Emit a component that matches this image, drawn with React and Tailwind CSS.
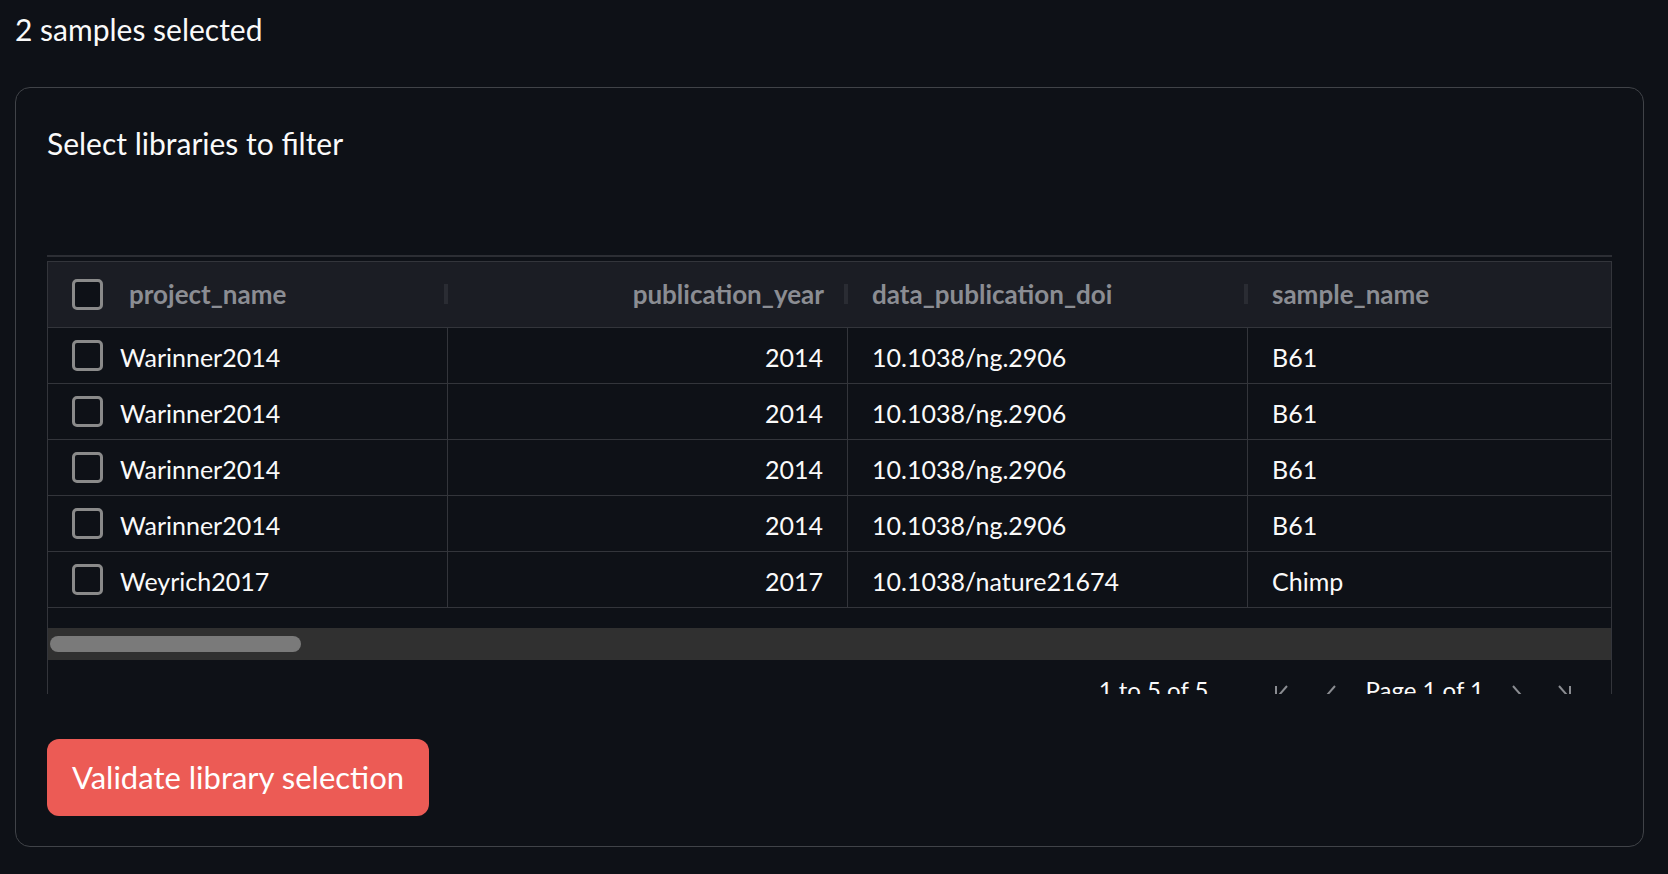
import React from 'react';

const rows = [
  { project: 'Warinner2014', year: 2014, doi: '10.1038/ng.2906', sample: 'B61' },
  { project: 'Warinner2014', year: 2014, doi: '10.1038/ng.2906', sample: 'B61' },
  { project: 'Warinner2014', year: 2014, doi: '10.1038/ng.2906', sample: 'B61' },
  { project: 'Warinner2014', year: 2014, doi: '10.1038/ng.2906', sample: 'B61' },
  { project: 'Weyrich2017', year: 2017, doi: '10.1038/nature21674', sample: 'Chimp' },
];

const Checkbox = () => (
  <div className="w-[31px] h-[31px] shrink-0 border-[3px] border-[#8a8a8a] rounded-[5px] bg-[#0e1117]" />
);

const Handle = () => (
  <div className="absolute right-0 top-[22px] w-[4px] h-[20px] bg-[#2a2c33]" />
);

const PageIcon = ({ type }) => (
  <svg className="w-[16px] h-[22px]" viewBox="0 0 16 22" fill="none" stroke="#8a8c91" strokeWidth={2}>
    {type === 'first' && (
      <>
        <path d="M2 3v16" />
        <path d="M13 3l-7 8 7 8" />
      </>
    )}
    {type === 'prev' && <path d="M11 3l-7 8 7 8" />}
    {type === 'next' && <path d="M5 3l7 8-7 8" />}
    {type === 'last' && (
      <>
        <path d="M3 3l7 8-7 8" />
        <path d="M14 3v16" />
      </>
    )}
  </svg>
);

const App = () => {
  return (
    <div className="min-h-screen bg-[#0e1117] text-[#fafafa] font-['Lato',sans-serif] pl-[15px] pr-[24px] pt-[10px]">
      {/* Header */}
      <p className="text-[30px] leading-[38px]">2 samples selected</p>

      {/* Card */}
      <div className="mt-[39px] border border-[#404348] rounded-[15px] px-[31px] pt-[36px] pb-[30px]">
        <h3 className="text-[30px] leading-[38px]">Select libraries to filter</h3>

        {/* Grid */}
        <div className="mt-[93px] border-t-2 border-[#2c2e34] pt-[4px]">
          <div className="h-[433px] overflow-hidden border-x border-t border-[#33353b] flex flex-col">
            <div className="h-[66px] shrink-0 flex bg-[#1b1d24] border-b border-[#33353b] text-[26px] font-bold text-[#8b8d93]">
              <div className="relative w-[400px] shrink-0 flex items-center pl-[24px]">
                <Checkbox />
                <span className="ml-[26px]">project_name</span>
                <Handle />
              </div>
              <div className="relative w-[400px] shrink-0 flex items-center justify-end pr-[24px]">
                <span>publication_year</span>
                <Handle />
              </div>
              <div className="relative w-[400px] shrink-0 flex items-center pl-[24px]">
                <span>data_publication_doi</span>
                <Handle />
              </div>
              <div className="flex-1 min-w-0 flex items-center pl-[24px]">
                <span>sample_name</span>
              </div>
            </div>

            {rows.map((row, i) => (
              <div key={i} className="h-[56px] shrink-0 flex border-b border-[#33353b] text-[25px]">
                <div className="w-[400px] shrink-0 flex items-center pl-[24px] border-r border-[#33353b]">
                  <Checkbox />
                  <span className="ml-[17px] mt-[4px]">{row.project}</span>
                </div>
                <div className="w-[400px] shrink-0 flex items-center justify-end pr-[24px] border-r border-[#33353b]">
                  <span className="mt-[4px]">{row.year}</span>
                </div>
                <div className="w-[400px] shrink-0 flex items-center pl-[24px] border-r border-[#33353b]">
                  <span className="mt-[4px]">{row.doi}</span>
                </div>
                <div className="flex-1 min-w-0 flex items-center pl-[24px]">
                  <span className="mt-[4px]">{row.sample}</span>
                </div>
              </div>
            ))}

            <div className="h-[20px] shrink-0" />

            {/* Horizontal scrollbar */}
            <div className="h-[32px] shrink-0 bg-[#303030] flex items-center pl-[2px]">
              <div className="w-[251px] h-[16px] rounded-full bg-[#7a7a7a]" />
            </div>

            {/* Pagination */}
            <div className="flex justify-end items-start pr-[39px] pt-[11px] text-[24px] leading-[38px]">
              <span>1 to 5 of 5</span>
              <div className="ml-[66px] mt-[12px]"><PageIcon type="first" /></div>
              <div className="ml-[34px] mt-[12px]"><PageIcon type="prev" /></div>
              <span className="ml-[25px]">Page 1 of 1</span>
              <div className="ml-[24px] mt-[12px]"><PageIcon type="next" /></div>
              <div className="ml-[32px] mt-[12px]"><PageIcon type="last" /></div>
            </div>
          </div>
        </div>

        <button className="mt-[45px] h-[77px] px-[25px] rounded-[12px] bg-[#ec5b55] text-white text-[31px]">
          Validate library selection
        </button>
      </div>
    </div>
  );
};

export default App;
